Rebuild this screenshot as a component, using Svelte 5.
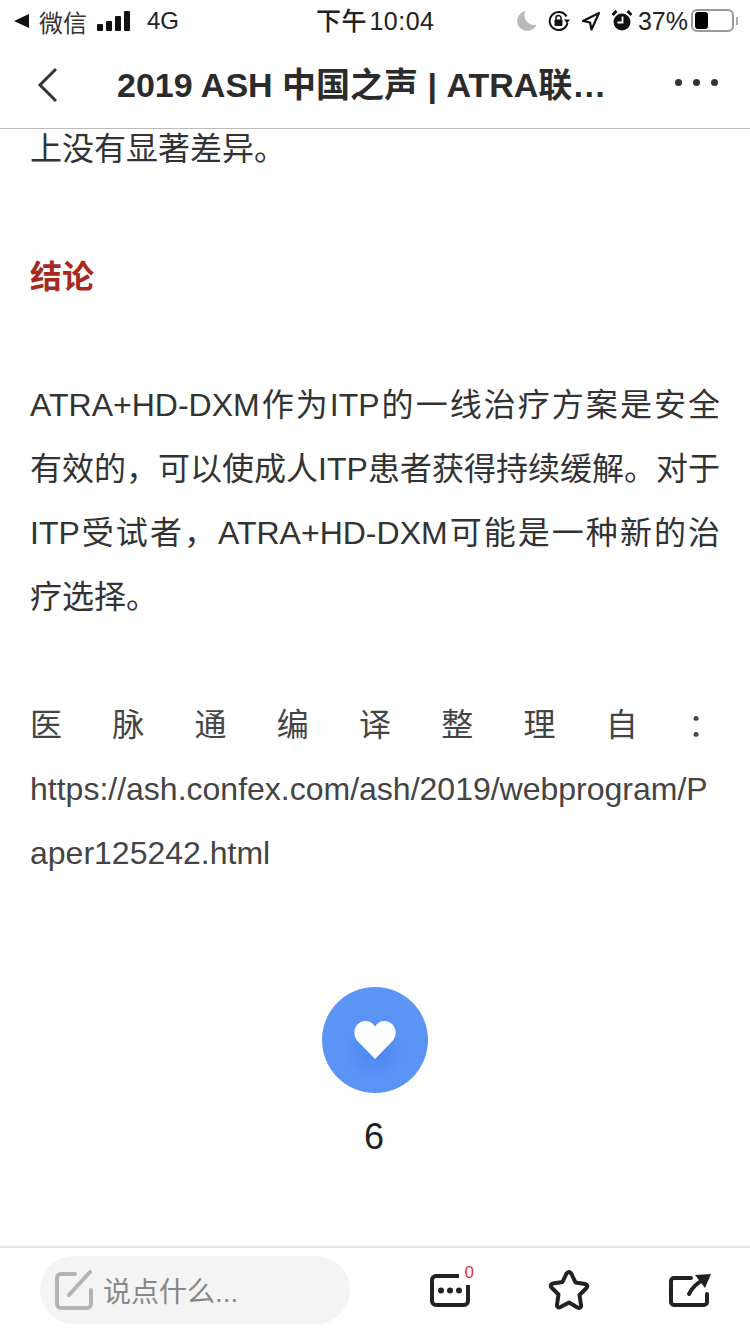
<script>
  const paragraphs = [
    'ATRA+HD-DXM作为ITP的一线治疗方案是安全有效的，可以使成人ITP患者获得持续缓解。对于ITP受试者，ATRA+HD-DXM可能是一种新的治疗选择。'
  ];
</script>

<div class="page">
  <header>
    <div class="status">
      <div class="status-left">
        <span class="back-arrow"></span>
        <span class="carrier">微信</span>
        <span class="bars"><i></i><i></i><i></i><i></i></span>
        <span class="net">4G</span>
      </div>
      <div class="clock">下午 10:04</div>
      <div class="status-right">
        <svg width="20" height="20" viewBox="0 0 20 20"><path d="M8.500 0a10 10 0 1 0 11 13.500A9.500 9.500 0 0 1 8.500 0z" fill="#b8b8b8"/></svg>
        <svg width="22" height="22" viewBox="0 0 22 22" fill="none" stroke="#111" stroke-width="2"><path d="M18.500 6.500A9 9 0 1 0 19.500 13"/><path d="M16 9.500h6l-3 4z" fill="#111" stroke="none"/><rect x="6.500" y="9.500" width="8" height="6.500" rx="1" fill="#111" stroke="none"/><path d="M8 10V8a2.500 2.500 0 0 1 5 0v2" stroke-width="1.500"/></svg>
        <svg width="20" height="20" viewBox="0 0 20 20" fill="none" stroke="#111" stroke-width="2.200" stroke-linejoin="round"><path d="M18 2 2 10l7 1.500 1.500 7z"/></svg>
        <svg width="20" height="22" viewBox="0 0 20 22"><circle cx="10" cy="12" r="8.500" fill="#111"/><path d="M10.500 6.500v6H5.500" fill="none" stroke="#fff" stroke-width="1.800"/><path d="M0.500 5 4.500 1M19.500 5l-4-4" stroke="#111" stroke-width="3"/></svg>
        <span class="pct">37%</span>
        <span class="battery"><span class="level"></span></span>
        <span class="nub"></span>
      </div>
    </div>
    <nav>
      <svg class="chevron" width="24" height="36" viewBox="0 0 24 36" fill="none" stroke="#333" stroke-width="3"><path d="M20 2 4 18l16 16"/></svg>
      <h1>2019 ASH 中国之声 | ATRA联…</h1>
      <div class="more"><i></i><i></i><i></i></div>
    </nav>
  </header>

  <main>
    <article>
      <p>上没有显著差异。</p>
      <p class="blank"></p>
      <p class="heading">结论</p>
      <p class="blank"></p>
      {#each paragraphs as text}
        <p>{text}</p>
      {/each}
      <p class="blank"></p>
      <p class="source">医脉通编译整理自：</p>
      <p class="url">https://ash.confex.com/ash/2019/webprogram/Paper125242.html</p>
    </article>

    <div class="like">
      <div class="like-btn">
        <svg width="42" height="38" viewBox="0 0 42 38"><path d="M21 38 3.500 20C-3.500 11.500 2 0 11.500 0 15.500 0 19 2 21 5.500 23 2 26.500 0 30.500 0 40 0 45.500 11.500 38.500 20z" fill="#fff"/></svg>
      </div>
      <div class="count">6</div>
    </div>
  </main>

  <footer>
    <div class="comment">
      <svg width="38" height="40" viewBox="0 0 38 40" fill="none" stroke="#b3b3b3" stroke-width="4" stroke-linecap="round"><path d="M20 4H6a4 4 0 0 0-4 4v26a4 4 0 0 0 4 4h26a4 4 0 0 0 4-4V20"/><path d="M14 25 35 2"/></svg>
      <span>说点什么...</span>
    </div>
    <div class="actions">
      <div class="msg">
        <svg width="40" height="33" viewBox="0 0 40 33" fill="none" stroke="#222" stroke-width="4"><path d="M29 2H6a4 4 0 0 0-4 4v21a4 4 0 0 0 4 4h28a4 4 0 0 0 4-4V11"/><g fill="#222" stroke="none"><circle cx="11" cy="16.500" r="3"/><circle cx="20" cy="16.500" r="3"/><circle cx="29" cy="16.500" r="3"/></g></svg>
        <span class="badge">0</span>
      </div>
      <svg class="star" width="42" height="42" viewBox="0 0 42 42" fill="none" stroke="#222" stroke-width="4" stroke-linejoin="round"><path d="M21 3c1.500 0 2 1 2.500 2l4 8.500 9.500 1.500c2.500.5 3 2.500 1.500 4l-7 7 1.500 10c.5 2.500-1.500 3.500-3.500 2.500L21 33.500 12.500 38c-2 1-4 0-3.500-2.500l1.500-10-7-7c-1.500-1.500-1-3.500 1.500-4l9.500-1.500 4-8.500C19 4 19.500 3 21 3z"/></svg>
      <svg class="share" width="42" height="33" viewBox="0 0 42 33" fill="none" stroke="#222" stroke-width="4" stroke-linecap="round"><path d="M22 4H5a3 3 0 0 0-3 3v21a3 3 0 0 0 3 3h30a3 3 0 0 0 3-3V20"/><path d="M20 20c3-6 8-11 14-14"/><path d="M26 1 42 0l-6 14z" fill="#222" stroke="none"/></svg>
    </div>
  </footer>
</div>

<style>
  :global(body) {
    margin: 0;
    background: #fff;
  }

  .page {
    width: 750px;
    height: 1334px;
    display: flex;
    flex-direction: column;
    overflow: hidden;
    font-family: "Liberation Sans", "Noto Sans CJK SC", sans-serif;
    color: #333;
  }

  header {
    height: 128px;
    flex: none;
    border-bottom: 1px solid #bbb;
    background: #fff;
    position: relative;
    z-index: 1;
  }

  .status {
    height: 42px;
    display: flex;
    align-items: center;
    justify-content: space-between;
    padding: 0 12px 0 14px;
    color: #222;
    font-size: 24px;
    position: relative;
  }

  .status-left,
  .status-right {
    display: flex;
    align-items: center;
  }

  .back-arrow {
    width: 0;
    height: 0;
    border-style: solid;
    border-width: 7px 15px 7px 0;
    border-color: transparent #111 transparent transparent;
    margin-right: 10px;
  }

  .carrier {
    color: #333;
  }

  .bars {
    display: flex;
    align-items: flex-end;
    gap: 3px;
    margin: 0 17px 0 10px;
  }

  .bars i {
    width: 6px;
    border-radius: 1px;
    background: #111;
  }

  .bars i:nth-child(1) { height: 7px; }
  .bars i:nth-child(2) { height: 10px; }
  .bars i:nth-child(3) { height: 15px; }
  .bars i:nth-child(4) { height: 20px; }

  .clock {
    font-size: 25px;
    font-weight: 500;
    position: absolute;
    left: 316px;
    top: 1px;
    word-spacing: -5px;
    letter-spacing: 0.5px;
  }

  .status-right {
    gap: 11px;
  }

  .pct {
    font-size: 25px;
    margin-left: -5px;
    margin-right: -8px;
  }

  .battery {
    width: 43px;
    height: 23px;
    margin-top: -2px;
    box-sizing: border-box;
    border: 2px solid #999;
    border-radius: 6px;
    padding: 1px 2px;
    display: block;
  }

  .level {
    display: block;
    width: 13px;
    height: 100%;
    background: #000;
    border-radius: 3px;
  }

  .nub {
    width: 2px;
    height: 8px;
    background: #aaa;
    margin-left: -9px;
  }

  nav {
    height: 86px;
    display: flex;
    align-items: center;
    position: relative;
    padding-left: 36px;
  }

  h1 {
    margin: 0 0 5px 57px;
    font-size: 34px;
    font-weight: 600;
    color: #2b2b2b;
    white-space: nowrap;
  }

  .more {
    position: absolute;
    right: 32px;
    top: 37px;
    display: flex;
    gap: 11px;
  }

  .more i {
    width: 7px;
    height: 7px;
    border-radius: 50%;
    background: #333;
  }

  main {
    flex: 1;
    overflow: hidden;
  }

  article {
    margin-top: -12px;
    padding: 0 30px;
    font-size: 32px;
    line-height: 64px;
    text-align: justify;
  }

  p {
    margin: 0;
  }

  .blank {
    height: 64px;
  }

  .heading {
    color: #a82a1f;
    font-weight: 700;
  }

  .source {
    text-align-last: justify;
    color: #444;
  }

  .url {
    word-break: break-all;
    text-align: left;
    color: #444;
  }

  .like {
    display: flex;
    flex-direction: column;
    align-items: center;
    margin-top: 102px;
  }

  .like-btn {
    width: 106px;
    height: 106px;
    border-radius: 50%;
    background: radial-gradient(circle at 50% 60%, #4d86f2 0, #5a92f5 35%, #5f97f7 100%);
    display: flex;
    align-items: center;
    justify-content: center;
  }

  .count {
    margin-top: 22px;
    margin-right: 2px;
    font-size: 36px;
    line-height: 44px;
    color: #222;
  }

  footer {
    height: 84px;
    flex: none;
    border-top: 2px solid #e6e6e6;
    display: flex;
    align-items: center;
    padding: 0 0 2px 40px;
    background: #fff;
  }

  .comment {
    width: 310px;
    height: 68px;
    border-radius: 34px;
    background: #f4f4f4;
    display: flex;
    align-items: center;
    gap: 10px;
    padding-left: 15px;
    box-sizing: border-box;
    color: #888;
    font-size: 28px;
  }

  .actions {
    display: flex;
    align-items: center;
    margin-left: 80px;
  }

  .msg {
    position: relative;
    display: flex;
  }

  .star {
    margin-left: 78px;
  }

  .share {
    margin-left: 79px;
  }

  .badge {
    position: absolute;
    right: -4px;
    top: -11px;
    font-size: 17px;
    color: #d33;
  }
</style>
